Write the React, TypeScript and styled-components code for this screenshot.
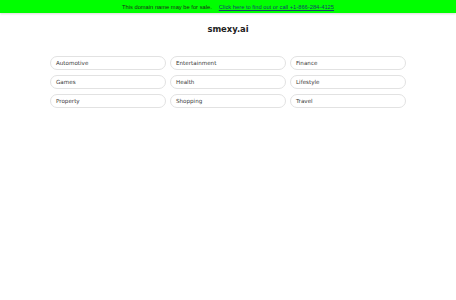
import React from 'react';
import styled, { createGlobalStyle } from 'styled-components';

const GlobalStyle = createGlobalStyle`
  html, body {
    margin: 0;
    padding: 0;
    background: #ffffff;
  }

  body {
    font-family: "DejaVu Sans", sans-serif;
  }
`;

const SaleBar = styled.div`
  align-items: center;
  background-color: #00ff00;
  box-shadow: 0 1px 2px rgba(0, 0, 0, 0.15);
  color: #1c2b1c;
  display: flex;
  font-family: "Liberation Sans", Arial, sans-serif;
  font-size: 5.75px;
  gap: 7px;
  height: 13px;
  justify-content: center;
`;

const SaleLink = styled.a`
  color: #17406e;
  text-decoration: underline;
`;

const Title = styled.h1`
  color: #222222;
  font-size: 8.4px;
  font-weight: bold;
  margin: 11px 0 0;
  text-align: center;
`;

const Grid = styled.div`
  display: grid;
  gap: 5px 4px;
  grid-template-columns: repeat(3, 1fr);
  margin: 22px auto 0;
  width: 356px;
`;

const Category = styled.a`
  align-items: center;
  border: 1px solid #e2e2e2;
  border-radius: 8px;
  box-sizing: border-box;
  color: #3a3a3a;
  display: flex;
  font-size: 5.6px;
  height: 14px;
  padding-left: 5px;
  text-decoration: none;
`;

const categories = [
  'Automotive',
  'Entertainment',
  'Finance',
  'Games',
  'Health',
  'Lifestyle',
  'Property',
  'Shopping',
  'Travel',
];

export default function App() {
  return (
    <>
      <GlobalStyle />
      <SaleBar>
        <span>This domain name may be for sale.</span>
        <SaleLink href="#">Click here to find out or call +1-866-284-4125</SaleLink>
      </SaleBar>
      <Title>smexy.ai</Title>
      <Grid>
        {categories.map((name) => (
          <Category key={name} href="#">{name}</Category>
        ))}
      </Grid>
    </>
  );
}
